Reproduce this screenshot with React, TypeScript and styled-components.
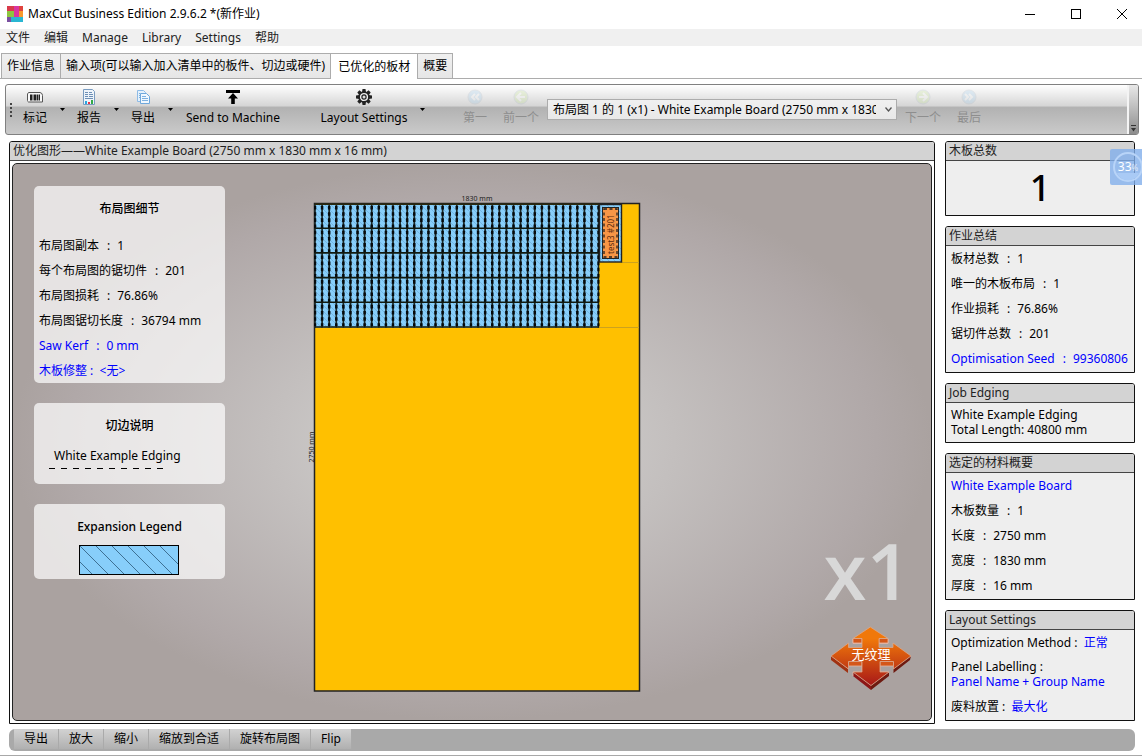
import React from "react";
import styled, { createGlobalStyle, css } from "styled-components";

const GlobalStyle = createGlobalStyle`
  * { box-sizing: border-box; }
  body {
    margin: 0;
    background: #fff;
    color: #000;
    font-family: "Noto Sans", "Noto Sans CJK SC", sans-serif;
    font-size: 12px;
    line-height: 16px;
  }
  button, select { font: inherit; color: inherit; }
  button { border: 0; padding: 0; background: none; white-space: nowrap; }
  p, h1, h2 { margin: 0; font: inherit; }
  a { text-decoration: none; }
`;

const Window = styled.div`
  position: relative;
  display: flex;
  flex-direction: column;
  min-height: 100vh;
  border-bottom: 1px solid #a8a8a8;
`;

const TitleBar = styled.header`
  display: flex;
  align-items: center;
  height: 29px;
  padding: 0 0 2px 7px;
  gap: 5px;
`;

const Title = styled.h1`
  flex: 1;
  white-space: nowrap;
`;

const WindowButton = styled.button`
  display: flex;
  align-items: center;
  justify-content: center;
  width: 41px;
  height: 27px;
`;

const MenuBar = styled.nav`
  display: flex;
  align-items: center;
  gap: 14px;
  height: 17px;
  padding-left: 6px;
  background: #f0f0f0;
  color: #222;
`;

const TabBar = styled.div`
  display: flex;
  height: 33px;
  padding: 7px 0 0 2px;
  border-bottom: 1px solid #acacac;
`;

const Tab = styled.button<{ $active?: boolean }>`
  height: ${(p) => (p.$active ? 26 : 25)}px;
  padding: 0 ${(p) => (p.$active ? 7 : 5)}px;
  margin-left: -1px;
  border: 1px solid #acacac;
  border-bottom: 0;
  background: ${(p) => (p.$active ? "#fff" : "linear-gradient(#f0f0f0, #e6e6e6)")};
`;

const ToolBar = styled.div`
  display: flex;
  align-items: stretch;
  height: 51px;
  margin: 5px 3px 0 5px;
  border: 1px solid #808080;
  border-radius: 3px;
  background: linear-gradient(#fff 0%, #d6d6d6 42%, #b2b2b2 46%, #cacaca 100%);
  overflow: hidden;
`;

const Grip = styled.div`
  width: 2px;
  height: 15px;
  margin: 18px 5px 0 4px;
  background: repeating-linear-gradient(#444 0 2px, transparent 2px 4px);
`;

const Tool = styled.button<{ $width: number; $faded?: boolean }>`
  display: flex;
  flex: none;
  flex-direction: column;
  align-items: center;
  gap: 5px;
  width: ${(p) => p.$width}px;
  padding-top: 4px;
  ${(p) => p.$faded && css`
    color: #8e8e8e;
    svg { opacity: 0.2; }
  `}
`;

const ToolArrow = styled.button`
  display: flex;
  flex: none;
  align-items: center;
  justify-content: center;
  width: 18px;
`;

const ToolSpace = styled.div<{ $width: number }>`
  flex: none;
  width: ${(p) => p.$width}px;
`;

const Pager = styled.div`
  display: flex;
  gap: 2px;
`;

const SelectBox = styled.label`
  display: grid;
  align-items: center;
  align-self: center;
  width: 350px;
  margin: 0 2px;
  svg {
    grid-area: 1 / 1;
    justify-self: end;
    margin-right: 5px;
    pointer-events: none;
  }
`;

const Select = styled.select`
  grid-area: 1 / 1;
  appearance: none;
  width: 100%;
  height: 21px;
  padding: 0 20px 0 5px;
  border: 1px solid #acacac;
  border-radius: 0;
  background: linear-gradient(#f0f0f0, #e8e8e8);
`;

const ToolEnd = styled.div`
  display: flex;
  align-items: flex-end;
  justify-content: center;
  width: 11px;
  margin-left: auto;
  padding-bottom: 2px;
  border-left: 2px solid #f4f4f4;
  background: linear-gradient(#e8e8e8, #8c8c8c);
`;

const Main = styled.main`
  display: flex;
  flex: 1;
  gap: 10px;
  padding: 6px 7px 0 9px;
`;

const Panel = styled.section`
  display: flex;
  flex-direction: column;
  border: 1px solid #111;
  border-radius: 3px 3px 0 0;
  background: #eee;
`;

const DrawingPanel = styled(Panel)`
  flex: 1;
  min-width: 0;
  background: #fff;
`;

const PanelTitle = styled.h2`
  height: 19px;
  padding-left: 3px;
  border-bottom: 1px solid #444;
  border-radius: 2px 2px 0 0;
  background: #d3d3d3;
  color: #222;
  line-height: 18px;
`;

const Canvas = styled.div`
  display: grid;
  grid-template-columns: 1fr auto 1fr;
  flex: 1;
  margin: 2px;
  border: 1px solid #222;
  border-radius: 5px;
  background: radial-gradient(ellipse 50% 50% at 50% 50%, #d6d6d4, #b0a8a8 88%, #aaa2a0);
`;

const Cards = styled.div`
  display: flex;
  flex-direction: column;
  gap: 20px;
  width: 191px;
  margin: 22px 0 0 21px;
`;

const Card = styled.section<{ $bottom: number }>`
  padding: 15px 5px ${(p) => p.$bottom}px;
  border-radius: 5px;
  background: rgba(255, 255, 255, 0.7);
`;

const CardTitle = styled.h2`
  font-weight: 500;
  text-align: center;
`;

const Lines = styled.div<{ $top?: number }>`
  display: flex;
  flex-direction: column;
  padding-top: ${(p) => p.$top ?? 0}px;
  line-height: 25px;
  white-space: pre;
`;

const Colon = styled.span`
  margin: 0 7px 0 8px;
`;

const ValueLink = styled.a`
  color: #00f;
`;

const EdgeName = styled.p`
  padding: 14px 15px 0;
`;

const Dashes = styled.div`
  width: 118px;
  height: 1px;
  margin: 4px 10px 0;
  background: repeating-linear-gradient(90deg, #000 0 6px, transparent 6px 12px);
`;

const Swatch = styled.svg`
  display: block;
  margin: 10px auto 0;
`;

const Sheet = styled.svg`
  display: block;
  margin-top: 27px;
`;

const Marks = styled.div`
  display: flex;
  flex-direction: column;
  align-items: center;
  justify-content: flex-end;
  justify-self: end;
  gap: 12px;
  padding: 0 20px 29px 0;
`;

const Count = styled.p`
  color: #d8d8d8;
  font-family: "Open Sans", sans-serif;
  font-size: 78px;
  font-weight: 600;
  line-height: 88px;
`;

const Side = styled.aside`
  display: flex;
  flex-direction: column;
  gap: 10px;
  width: 190px;
`;

const PanelBody = styled.div<{ $bottom?: number }>`
  padding: 0 5px ${(p) => p.$bottom ?? 0}px;
`;

const Total = styled.p`
  font-size: 36px;
  font-weight: 500;
  line-height: 54px;
  text-align: center;
`;

const Pair = styled.p`
  padding: 4px 0 5px;
  line-height: 15px;
`;

const StatusBar = styled.footer`
  display: flex;
  height: 22px;
  margin: 5px 7px 4px 9px;
  padding-left: 5px;
  border-radius: 6px;
  background: #a9a9a9;
`;

const StatusButton = styled.button`
  height: 20px;
  padding: 0 10px;
  border-right: 1px solid #aaa;
  background: linear-gradient(#d2d2d2, #b0b0b0);
`;

const Badge = styled.div`
  position: absolute;
  top: 149px;
  right: 0;
  display: grid;
  place-items: center;
  width: 32px;
  height: 36px;
  overflow: hidden;
  border-radius: 2px 0 0 2px;
  background: rgba(130, 175, 235, 0.8);
  color: #fff;
  svg, span { grid-area: 1 / 1; }
  span { padding-left: 4px; }
  small { font-size: 8px; opacity: 0.7; }
`;

const menus = ["文件", "编辑", "Manage", "Library", "Settings", "帮助"];
const tabs = ["作业信息", "输入项(可以输入加入清单中的板件、切边或硬件)", "已优化的板材", "概要"];
const details = [["布局图副本", "1"], ["每个布局图的锯切件", "201"], ["布局图损耗", "76.86%"], ["布局图锯切长度", "36794 mm"]];
const summary = [["板材总数", "1"], ["唯一的木板布局", "1"], ["作业损耗", "76.86%"], ["锯切件总数", "201"]];
const material = [["木板数量", "1"], ["长度", "2750 mm"], ["宽度", "1830 mm"], ["厚度", "16 mm"]];
const statusActions = ["导出", "放大", "缩小", "缩放到合适", "旋转布局图", "Flip"];

const Fact = ({ name, value }: { name: string; value: string }) => (
  <span>{name}<Colon>:</Colon>{value}</span>
);

const Logo = () => (
  <svg width="16" height="16" viewBox="0 0 16 16">
    <path fill="#d93a4a" d="M0 0h7v5H0z" />
    <path fill="#8cc63f" d="M0 5h7v6H0z" />
    <path fill="#7a4fa0" d="M0 11h4v5H0z" />
    <path fill="#d935a0" d="M7 0h5v11H7z" />
    <path fill="#e0443e" d="M12 0h4v5h-4z" />
    <path fill="#f79a2c" d="M12 5h4v6h-4z" />
    <path fill="#29b6d2" d="M4 11h12v5H4z" />
  </svg>
);

const TagIcon = () => (
  <svg width="16" height="16" viewBox="0 0 16 16">
    <path d="M1.500 3.500h11.500q2.500.5 2.500 3v6.500h-14q-1-.5-1-1.500v-6.500z" fill="#f8f8f8" stroke="#555" />
    <path d="M3 5.500h2v6H3zM5.500 5.500h1v6h-1zM7 5.500h2.500v6H7zM10 5.500h1v6h-1zM11.500 5.500h1.500v6h-1.500z" fill="#222" />
  </svg>
);

const ReportIcon = () => (
  <svg width="16" height="16" viewBox="0 0 16 16">
    <path d="M2.500.5h9l2 2v13h-11z" fill="#eef4fa" stroke="#7a9cc0" />
    <path d="M4 3.500h3M8 3.500h3M4 5.500h3M8 5.500h4M4 7.500h3M8 7.500h4M4 9.500h8" stroke="#6d8fb5" />
    <path d="M4 12h2v3H4z" fill="#2aa5e0" />
    <path d="M7 13h2v2H7z" fill="#e34" />
    <path d="M10 11h2v4h-2z" fill="#3a4" />
  </svg>
);

const ExportIcon = () => (
  <svg width="16" height="16" viewBox="0 0 16 16">
    <path d="M2.500 1.500h6l2 2v9h-8z" fill="#e4f1fc" stroke="#8ebbe6" />
    <path d="M5.500 4.500h6l3 3v7h-9z" fill="#f0f8ff" stroke="#6fa8dc" />
    <path d="M4 4.500h1M4 6.500h1M4 8.500h1M7 7.500h4M7 9.500h6M7 11.500h6" stroke="#7db1e0" />
  </svg>
);

const SendIcon = () => (
  <svg width="16" height="16" viewBox="0 0 16 16">
    <path d="M1 1h14v3H1zM8 4l5 5.500H9.800V15H6.200V9.500H3z" fill="#000" />
  </svg>
);

const GearIcon = () => (
  <svg width="16" height="16" viewBox="0 0 16 16">
    {[0, 45, 90, 135, 180, 225, 270, 315].map((a) => (
      <path key={a} d="M6.500 0h3l.5 3.500H6z" fill="#222" transform={`rotate(${a} 8 8)`} />
    ))}
    <circle cx="8" cy="8" r="4.900" fill="#eee" stroke="#222" strokeWidth="1.600" />
    <circle cx="8" cy="8" r="2.100" fill="#ddd" stroke="#222" strokeWidth="1.200" />
  </svg>
);

const RoundIcon = ({ color, path }: { color: string; path: string }) => (
  <svg width="16" height="16" viewBox="0 0 16 16">
    <circle cx="8" cy="8" r="7" fill={color} stroke="#9ab" />
    <path d={path} fill="none" stroke="#fff" strokeWidth="2" />
  </svg>
);

const Arrow = () => (
  <svg width="5" height="3" viewBox="0 0 5 3">
    <path d="M0 0h5L2.500 3z" fill="#000" />
  </svg>
);

const edges = Array.from({ length: 41 }, (_, i) => 315 + i * 7.09);
const rows = Array.from({ length: 5 }, (_, i) => i);

const CutSheet = () => (
  <Sheet width="338" height="502" viewBox="303 191 338 502" role="img" aria-label="White Example Board">
    <defs>
      <pattern id="hatch" width="6" height="6" patternUnits="userSpaceOnUse">
        <rect width="6" height="6" fill="#87cefa" />
        <path d="M-1 -1L7 7" stroke="#6fb0dc" strokeWidth="0.800" />
      </pattern>
      <clipPath id="parts">
        <rect x="314" y="203" width="285.500" height="125" />
      </clipPath>
    </defs>
    <rect x="314.500" y="203.500" width="325" height="487.500" fill="#ffc000" stroke="#222" strokeWidth="1.500" />
    <path d="M621 262.500h18M599 327.500h40" stroke="#cda21e" />
    <rect x="315" y="204" width="284" height="123.500" fill="url(#hatch)" />
    <g clipPath="url(#parts)">
      {edges.map((x) => (
        <g key={x}>
          <path d={`M${x} 204v123.500`} stroke="#1a2826" strokeWidth="1.700" />
          <path d={`M${x} 206v120`} stroke="#060a0c" strokeWidth="2.500" strokeDasharray="3.600 2.575" />
        </g>
      ))}
    </g>
    {rows.map((r) => (
      <path key={r} d={`M315 ${204 + (r + 1) * 24.7 - 0.5}h284`} stroke="#111a10" strokeWidth="1.600" />
    ))}
    <path d="M315 204.300h284" stroke="#2b2a10" strokeWidth="1.400" />
    <rect x="599.500" y="204.500" width="22" height="57.500" fill="url(#hatch)" stroke="#222" strokeWidth="1.400" />
    <rect x="602.500" y="207.500" width="16" height="51" fill="#f79646" stroke="#222" />
    <rect x="604" y="209" width="13" height="48" fill="none" stroke="#222" strokeWidth="1.300" strokeDasharray="3 2.500" />
    <text transform="translate(614 254) rotate(-90)" fontSize="8" fill="#5a2c10">test3 #201</text>
    <text x="477" y="201" fontSize="7" fill="#222" textAnchor="middle">1830 mm</text>
    <text transform="translate(314 447) rotate(-90)" fontSize="7" fill="#222" textAnchor="middle">2750 mm</text>
  </Sheet>
);

const GrainIcon = () => (
  <svg width="74" height="65" viewBox="3 -1 74 65" overflow="visible">
    <defs>
      <linearGradient id="grain" x1="0" y1="0" x2="0" y2="1">
        <stop offset="0.200" stopColor="#f0780a" />
        <stop offset="1" stopColor="#a81818" />
      </linearGradient>
    </defs>
    <g transform="translate(4 0)">
      <path d="M0 29L17 42V46L0 33Z" fill="#a03212" />
      <path d="M80 29L62.500 42V46L79 33ZM58 45L40 58.500V63L58 49Z" fill="#6e1a10" />
      <path d="M22 45L40 58.500V63L22 49Z" fill="#8c1616" />
      <path d="M17.500 34.500H31V45H22V49M62.500 34.500H49V45H58M22 12V16.500H31M57 12V16.500H48" fill="none" stroke="#e0b0a0" strokeWidth="0.900" />
      <path d="M17.500 34.500H31V39H17.500ZM49 34.500H62.500V39H49ZM22 11.500H31V16H22ZM48 11.500H57V16H48Z" fill="#d4571a" stroke="#e6b8a4" strokeWidth="0.800" />
      <path
        d="M39.300 0L57 11.500H48V20.500H62V16L80 29L62.500 42V34.500H49V45H58L40 58.500L22 45H31V34.500H17.500V42L0 29L17.500 16V20.500H31V11.500H22Z"
        fill="url(#grain)"
        stroke="#dba78c"
        strokeWidth="0.800"
      />
      <text x="40" y="32" fontSize="13" fill="#fff" textAnchor="middle">无纹理</text>
    </g>
  </svg>
);

export default function App() {
  return (
    <>
      <GlobalStyle />
      <Window>
        <TitleBar>
          <Logo />
          <Title>MaxCut Business Edition 2.9.6.2 *(新作业)</Title>
          <WindowButton aria-label="Minimize">
            <svg width="10" height="10"><path d="M0 5.500h10" stroke="#000" /></svg>
          </WindowButton>
          <WindowButton aria-label="Maximize">
            <svg width="10" height="10"><rect x="0.500" y="0.500" width="9" height="9" fill="none" stroke="#000" /></svg>
          </WindowButton>
          <WindowButton aria-label="Close">
            <svg width="10" height="10"><path d="M0 0l10 10M10 0L0 10" stroke="#000" /></svg>
          </WindowButton>
        </TitleBar>
        <MenuBar>
          {menus.map((m) => <button key={m}>{m}</button>)}
        </MenuBar>
        <TabBar role="tablist">
          {tabs.map((t, i) => (
            <Tab key={t} role="tab" aria-selected={i === 2} $active={i === 2}>{t}</Tab>
          ))}
        </TabBar>
        <ToolBar role="toolbar">
          <Grip />
          <Tool $width={36}><TagIcon />标记</Tool>
          <ToolArrow aria-label="标记"><Arrow /></ToolArrow>
          <Tool $width={36}><ReportIcon />报告</Tool>
          <ToolArrow aria-label="报告"><Arrow /></ToolArrow>
          <Tool $width={36}><ExportIcon />导出</Tool>
          <ToolArrow aria-label="导出"><Arrow /></ToolArrow>
          <Tool $width={108}><SendIcon />Send to Machine</Tool>
          <ToolSpace $width={28} />
          <Tool $width={98}><GearIcon />Layout Settings</Tool>
          <ToolArrow aria-label="Layout Settings"><Arrow /></ToolArrow>
          <ToolSpace $width={22} />
          <Pager>
            <Tool $width={44} $faded><RoundIcon color="#8ac4ee" path="M8 5L5 8l3 3M12 5L9 8l3 3" />第一</Tool>
            <Tool $width={44} $faded><RoundIcon color="#b8e07a" path="M8 4L4 8l4 4M4 8h8" />前一个</Tool>
            <SelectBox>
              <Select aria-label="布局图">
                <option>布局图 1 的 1 (x1) - White Example Board (2750 mm x 1830 mm x 16 mm)</option>
              </Select>
              <svg width="7" height="5"><path d="M0.500 0.500L3.500 4L6.500 0.500" fill="none" stroke="#555" strokeWidth="1.300" /></svg>
            </SelectBox>
            <Tool $width={44} $faded><RoundIcon color="#b8e07a" path="M8 4l4 4l-4 4M12 8H4" />下一个</Tool>
            <Tool $width={44} $faded><RoundIcon color="#8ac4ee" path="M4 5l3 3l-3 3M8 5l3 3l-3 3" />最后</Tool>
          </Pager>
          <ToolEnd>
            <svg width="5" height="7"><path d="M0 0.500h5" stroke="#333" /><path d="M0 3h5L2.500 6.500z" fill="#333" /></svg>
          </ToolEnd>
        </ToolBar>
        <Main>
          <DrawingPanel>
            <PanelTitle>优化图形——White Example Board (2750 mm x 1830 mm x 16 mm)</PanelTitle>
            <Canvas>
              <Cards>
                <Card $bottom={0}>
                  <CardTitle>布局图细节</CardTitle>
                  <Lines $top={16}>
                    {details.map(([name, value]) => <Fact key={name} name={name} value={value} />)}
                    <ValueLink href="#kerf"><Fact name="Saw Kerf" value="0 mm" /></ValueLink>
                    <ValueLink href="#trim">{"木板修整 :  <无>"}</ValueLink>
                  </Lines>
                </Card>
                <Card $bottom={15}>
                  <CardTitle>切边说明</CardTitle>
                  <EdgeName>White Example Edging</EdgeName>
                  <Dashes />
                </Card>
                <Card $bottom={3}>
                  <CardTitle>Expansion Legend</CardTitle>
                  <Swatch width="101" height="31">
                    <rect x="0.500" y="0.500" width="99" height="29" fill="#87cefa" stroke="#000" />
                    <path
                      d="M1 17l12 12M1 1l28 28M17 1l28 28M33 1l28 28M49 1l28 28M65 1l28 28M81 1l18 18"
                      stroke="#2c5878"
                      strokeWidth="0.800"
                    />
                  </Swatch>
                </Card>
              </Cards>
              <CutSheet />
              <Marks>
                <Count>x1</Count>
                <GrainIcon />
              </Marks>
            </Canvas>
          </DrawingPanel>
          <Side>
            <Panel>
              <PanelTitle>木板总数</PanelTitle>
              <Total>1</Total>
            </Panel>
            <Panel>
              <PanelTitle>作业总结</PanelTitle>
              <PanelBody $bottom={1}>
                <Lines>
                  {summary.map(([name, value]) => <Fact key={name} name={name} value={value} />)}
                  <ValueLink href="#seed"><Fact name="Optimisation Seed" value="99360806" /></ValueLink>
                </Lines>
              </PanelBody>
            </Panel>
            <Panel>
              <PanelTitle>Job Edging</PanelTitle>
              <PanelBody>
                <Pair>White Example Edging<br />Total Length: 40800 mm</Pair>
              </PanelBody>
            </Panel>
            <Panel>
              <PanelTitle>选定的材料概要</PanelTitle>
              <PanelBody $bottom={1}>
                <Lines>
                  <ValueLink href="#board">White Example Board</ValueLink>
                  {material.map(([name, value]) => <Fact key={name} name={name} value={value} />)}
                </Lines>
              </PanelBody>
            </Panel>
            <Panel>
              <PanelTitle>Layout Settings</PanelTitle>
              <PanelBody $bottom={1}>
                <Lines>
                  <span>{"Optimization Method :  "}<ValueLink href="#method">正常</ValueLink></span>
                </Lines>
                <Pair>Panel Labelling :<br /><ValueLink href="#labels">Panel Name + Group Name</ValueLink></Pair>
                <Lines>
                  <span>{"废料放置 :  "}<ValueLink href="#offcuts">最大化</ValueLink></span>
                </Lines>
              </PanelBody>
            </Panel>
          </Side>
        </Main>
        <StatusBar>
          {statusActions.map((s) => <StatusButton key={s}>{s}</StatusButton>)}
        </StatusBar>
        <Badge>
          <svg width="32" height="36"><circle cx="18" cy="18" r="14" fill="none" stroke="#b8d4f8" strokeWidth="2" /><path d="M7 24h22a12 12 0 0 1-22 0z" fill="#a9caf5" /></svg>
          <span>33<small>%</small></span>
        </Badge>
      </Window>
    </>
  );
}
